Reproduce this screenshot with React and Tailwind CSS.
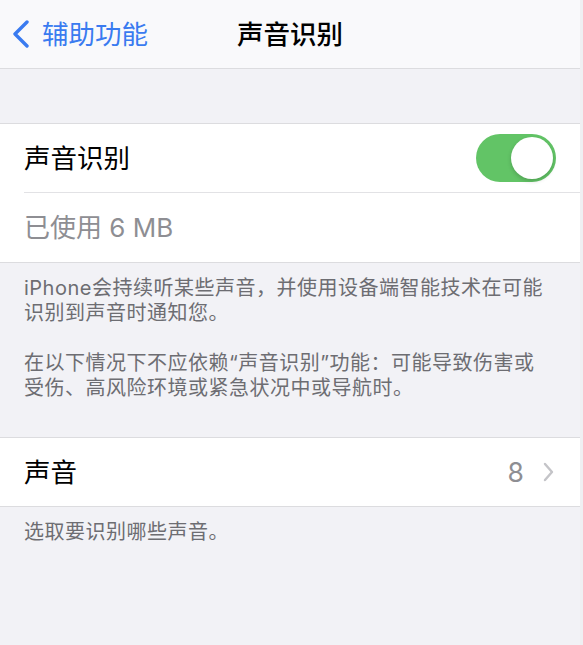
export default function App() {
  const font = { fontFamily: 'Inter, "Noto Sans CJK SC", sans-serif' };
  return (
    <div className="w-[583px] h-[645px] bg-[#f2f2f6] flex overflow-hidden" style={font}>
      <div className="flex-1 flex flex-col">
        {/* Nav bar */}
        <div className="h-[69px] bg-[#f9f9fb] border-b border-[#dcdcdf] grid grid-cols-[1fr_auto_1fr] items-center">
          <div className="flex items-center pl-[12px] gap-[12px] text-[#3a7bf0]">
            <svg width="18" height="28" viewBox="0 0 18 28" fill="none">
              <path d="M15 2 L3 14 L15 26" stroke="#3a7bf0" strokeWidth="3.4" strokeLinecap="round" strokeLinejoin="round" />
            </svg>
            <span className="text-[26.5px] leading-none">辅助功能</span>
          </div>
          <div className="text-[26.5px] font-medium text-black leading-none pt-[1px]">声音识别</div>
          <div />
        </div>

        <div className="h-[54px]" />

        {/* Group 1 */}
        <div className="bg-white border-y border-[#dcdcdf]">
          <div className="h-[68px] flex items-center justify-between pl-[24px] pr-[24px]">
            <span className="text-[26.5px] text-black leading-none">声音识别</span>
            <div className="w-[80px] h-[48px] rounded-full bg-[#62c466] flex items-center justify-end pr-[3px]">
              <div className="w-[42px] h-[42px] rounded-full bg-white shadow-[0_2px_4px_rgba(0,0,0,0.18)]" />
            </div>
          </div>
          <div className="ml-[24px] h-px bg-[#e2e2e5]" />
          <div className="h-[69px] flex items-center pl-[24px]">
            <span className="text-[26px] text-[#8e8e93] leading-none">已使用 6 MB</span>
          </div>
        </div>

        {/* Footer 1 */}
        <div className="pt-[13px] pl-[24px] pr-[34px] text-[20px] leading-[25px] text-[#6d6d72] tracking-[0.5px]">
          <p>iPhone会持续听某些声音，并使用设备端智能技术在可能识别到声音时通知您。</p>
          <p className="mt-[25px]">在以下情况下不应依赖“声音识别”功能：可能导致伤害或受伤、高风险环境或紧急状况中或导航时。</p>
        </div>

        <div className="h-[36px]" />

        {/* Group 2 */}
        <div className="bg-white border-y border-[#dcdcdf]">
          <div className="h-[68px] flex items-center justify-between pl-[24px] pr-[26px]">
            <span className="text-[26.5px] text-black leading-none">声音</span>
            <div className="flex items-center gap-[19px]">
              <span className="text-[26.5px] text-[#8e8e93] leading-none">8</span>
              <svg width="11" height="20" viewBox="0 0 11 20" fill="none">
                <path d="M2 2 L9 10 L2 18" stroke="#c4c4c8" strokeWidth="2.4" strokeLinecap="round" strokeLinejoin="round" />
              </svg>
            </div>
          </div>
        </div>

        {/* Footer 2 */}
        <div className="pt-[13px] px-[24px] text-[20px] leading-[25px] text-[#6d6d72] tracking-[0.5px]">
          <p>选取要识别哪些声音。</p>
        </div>
      </div>
      <div className="w-[3px] bg-[#efeff2]" />
    </div>
  );
}
